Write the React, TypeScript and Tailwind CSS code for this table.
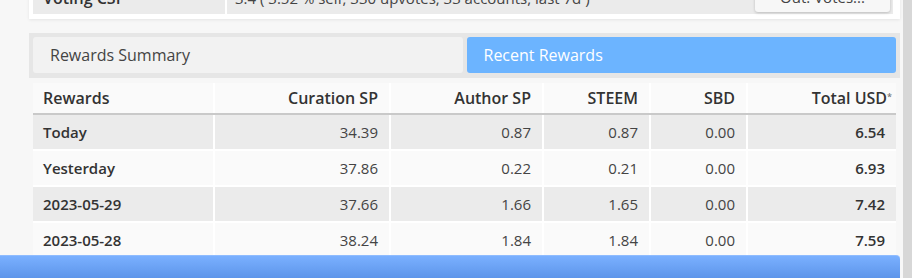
import React from 'react';

const rows = [
  { label: 'Today', curation: '34.39', author: '0.87', steem: '0.87', sbd: '0.00', usd: '6.54' },
  { label: 'Yesterday', curation: '37.86', author: '0.22', steem: '0.21', sbd: '0.00', usd: '6.93' },
  { label: '2023-05-29', curation: '37.66', author: '1.66', steem: '1.65', sbd: '0.00', usd: '7.42' },
  { label: '2023-05-28', curation: '38.24', author: '1.84', steem: '1.84', sbd: '0.00', usd: '7.59' },
];

export default function App() {
  return (
    <div className="flex h-[278px] w-[912px] overflow-hidden bg-[#f7f7f7] font-['Open_Sans',sans-serif] text-[15px] text-[#444]">
      <div className="w-[903px] shrink-0">
        <div className="ml-[29px] mr-[3px]">
          {/* Voting CSI card (scrolled, only its bottom shows) */}
          <div className="-mt-[22px] bg-white pb-[5px] pl-[4px] pr-[7px] pt-[4px] shadow-[0_1px_3px_rgba(0,0,0,0.08)]">
            <div className="flex h-[32px] bg-[#ebebeb]">
              <div className="flex w-[194px] items-center border-r-2 border-white pl-[10px] text-[16px] font-semibold text-[#333]">
                Voting CSI
              </div>
              <div className="flex flex-1 items-center justify-between pl-[8px] pr-[3px]">
                <span>3.4 ( 3.52 % self, 330 upvotes, 33 accounts, last 7d )</span>
                <button className="-mt-[2px] flex h-[30px] w-[135px] items-center justify-center rounded-[3px] bg-[#f7f7f7] text-[#444] shadow-[0_1px_3px_rgba(0,0,0,0.2)]">
                  Out. Votes...
                </button>
              </div>
            </div>
          </div>

          {/* Tabs */}
          <div className="mt-[14px] grid grid-cols-2 gap-[4px] bg-[#e6e6e6] px-[4px] pb-[5px] pt-[4px]">
            <div className="flex h-[36px] items-center rounded-[3px] bg-[#f2f2f2] pl-[17px] text-[16px] text-[#444]">
              Rewards Summary
            </div>
            <div className="flex h-[36px] items-center rounded-[3px] bg-[#6cb4ff] pl-[17px] text-[16px] text-white">
              Recent Rewards
            </div>
          </div>

          {/* Rewards table */}
          <div className="mx-[4px] mt-[5px]">
            <table className="w-full table-fixed border-collapse">
              <thead>
                <tr className="bg-[#fafafa] text-[16px] text-[#333]">
                  <th className="h-[31px] w-[181px] border-b-2 border-r-2 border-b-[#c9c9c9] border-r-white pl-[10px] text-left font-semibold">Rewards</th>
                  <th className="w-[176px] border-b-2 border-r-2 border-b-[#c9c9c9] border-r-white pr-[11px] text-right font-semibold">Curation SP</th>
                  <th className="w-[153px] border-b-2 border-r-2 border-b-[#c9c9c9] border-r-white pr-[11px] text-right font-semibold">Author SP</th>
                  <th className="w-[107px] border-b-2 border-r-2 border-b-[#c9c9c9] border-r-white pr-[11px] text-right font-semibold">STEEM</th>
                  <th className="w-[97px] border-b-2 border-r-2 border-b-[#c9c9c9] border-r-white pr-[11px] text-right font-semibold">SBD</th>
                  <th className="border-b-2 border-b-[#c9c9c9] pr-[4px] text-right font-semibold">
                    Total USD<sup className="text-[9px] text-[#777]">*</sup>
                  </th>
                </tr>
              </thead>
              <tbody>
                {rows.map((r, i) => (
                  <tr key={r.label} className={i % 2 === 0 ? 'bg-[#ebebeb]' : 'bg-[#fafafa]'}>
                    <td className="h-[36px] border-2 border-l-0 border-white pl-[10px] font-semibold text-[#333]">{r.label}</td>
                    <td className="border-2 border-white pr-[11px] text-right">{r.curation}</td>
                    <td className="border-2 border-white pr-[11px] text-right">{r.author}</td>
                    <td className="border-2 border-white pr-[11px] text-right">{r.steem}</td>
                    <td className="border-2 border-white pr-[11px] text-right">{r.sbd}</td>
                    <td className="border-2 border-r-0 border-white pr-[11px] text-right font-semibold text-[#333]">{r.usd}</td>
                  </tr>
                ))}
              </tbody>
            </table>
          </div>
        </div>
      </div>
      <div className="w-[9px] shrink-0 bg-[#d7d7d7]" />

      {/* bottom bar overlaying the page */}
      <div className="fixed bottom-0 left-0 h-[23px] w-[900px] rounded-tr-[4px] border-t border-[#8fbcff] bg-gradient-to-b from-[#7ab0ff] to-[#5d95ea]" />
    </div>
  );
}
